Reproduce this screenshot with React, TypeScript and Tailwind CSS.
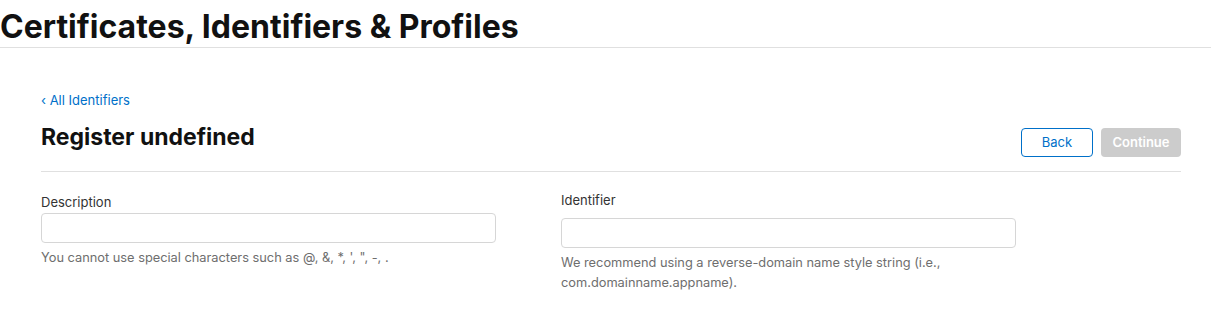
import React from 'react';

export default function App() {
  return (
    <div className="min-h-[316px] w-[1211px] bg-white text-[#111] font-['Inter','Noto_Sans',sans-serif]">
      <header className="border-b border-[#e0e0e0] pt-[9px] pb-[2px]">
        <h1 className="text-[32px] font-bold leading-[36px]">
          Certificates, Identifiers &amp; Profiles
        </h1>
      </header>

      <main className="ml-[41px] w-[1140px] pt-[44px]">
        <a href="#" className="block text-[13px] leading-[16px] text-[#0070c9]">
          ‹ All Identifiers
        </a>

        <div className="mt-[15px] flex items-start justify-between border-b border-[#e0e0e0] pb-[14px]">
          <h2 className="text-[23px] font-bold leading-[28px]">Register undefined</h2>
          <div className="mt-[5px] flex gap-2">
            <button className="h-[29px] w-[72px] rounded-[4px] border border-[#0070c9] text-[13px] text-[#0070c9]">
              Back
            </button>
            <button disabled className="h-[29px] w-[80px] rounded-[4px] bg-[#cccccc] text-[13px] font-semibold text-white">
              Continue
            </button>
          </div>
        </div>

        <div className="mt-[22px] grid grid-cols-[520px_520px]">
          <div>
            <label className="block text-[13px] leading-[16px] text-[#333]">Description</label>
            <input className="mt-[3px] h-[30px] w-[455px] rounded-[4px] border border-[#d6d6d6] px-2 text-[13px] outline-none" />
            <p className="mt-[5px] text-[12.8px] leading-[20px] text-[#6e6e6e]">
              You cannot use special characters such as @, &amp;, *, ', ", -, .
            </p>
          </div>
          <div className="-mt-[2px]">
            <label className="block text-[13px] leading-[16px] text-[#333]">Identifier</label>
            <input className="mt-[10px] h-[30px] w-[455px] rounded-[4px] border border-[#d6d6d6] px-2 text-[13px] outline-none" />
            <p className="mt-[5px] w-[455px] text-[12.8px] leading-[20px] text-[#6e6e6e]">
              We recommend using a reverse-domain name style string (i.e., com.domainname.appname).
            </p>
          </div>
        </div>
      </main>
    </div>
  );
}
